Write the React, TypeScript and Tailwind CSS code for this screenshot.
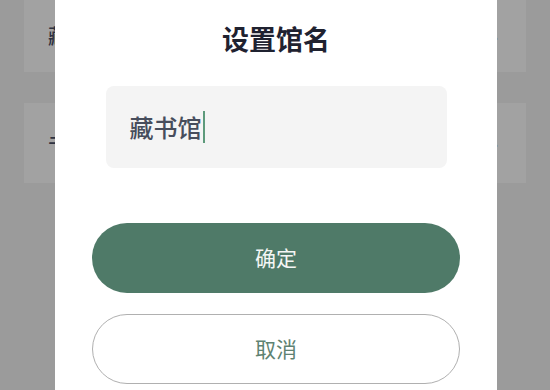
const App = () => {
  return (
    <div
      className="relative w-[550px] h-[390px] overflow-hidden bg-[#9b9b9b]"
      style={{ fontFamily: '"Noto Sans CJK SC", "Noto Sans", sans-serif' }}
    >
      {/* page behind the overlay */}
      <div className="flex flex-col gap-[31px] px-[24px] pt-0">
        {['藏书馆名称', '书架管理'].map((label, i) => (
          <div
            key={label}
            className={`flex items-center justify-between bg-[#a2a2a2] pl-[24px] pr-[28px] ${i === 0 ? 'h-[72px]' : 'h-[80px]'}`}
          >
            <span className="text-[20px] font-medium text-[#2e3140]">{label}</span>
            <span className="text-[18px] text-[#555]">›</span>
          </div>
        ))}
      </div>

      {/* dialog */}
      <div className="absolute left-[55px] top-[-20px] w-[442px] h-[430px] bg-white rounded-[14px] flex flex-col items-center">
        <div className="mt-[45px] text-[27px] font-bold leading-none text-[#1f2230]">设置馆名</div>

        <div className="mt-[34px] w-[341px] h-[82px] rounded-[8px] bg-[#f4f4f4] flex items-center px-[24px]">
          <span className="text-[24px] font-medium leading-none text-[#474d5c]">藏书馆</span>
          <span className="ml-[1px] w-[2px] h-[32px] bg-[#5d9a7b]" />
        </div>

        <button className="mt-[55px] w-[368px] h-[70px] rounded-full bg-[#4f7a68] text-[#f4f6f5] text-[21px]">
          确定
        </button>
        <button className="mt-[21px] w-[368px] h-[70px] rounded-full border border-[#b0b0b0] bg-white text-[#5e8271] text-[21px]">
          取消
        </button>
      </div>
    </div>
  );
};

export default App;
